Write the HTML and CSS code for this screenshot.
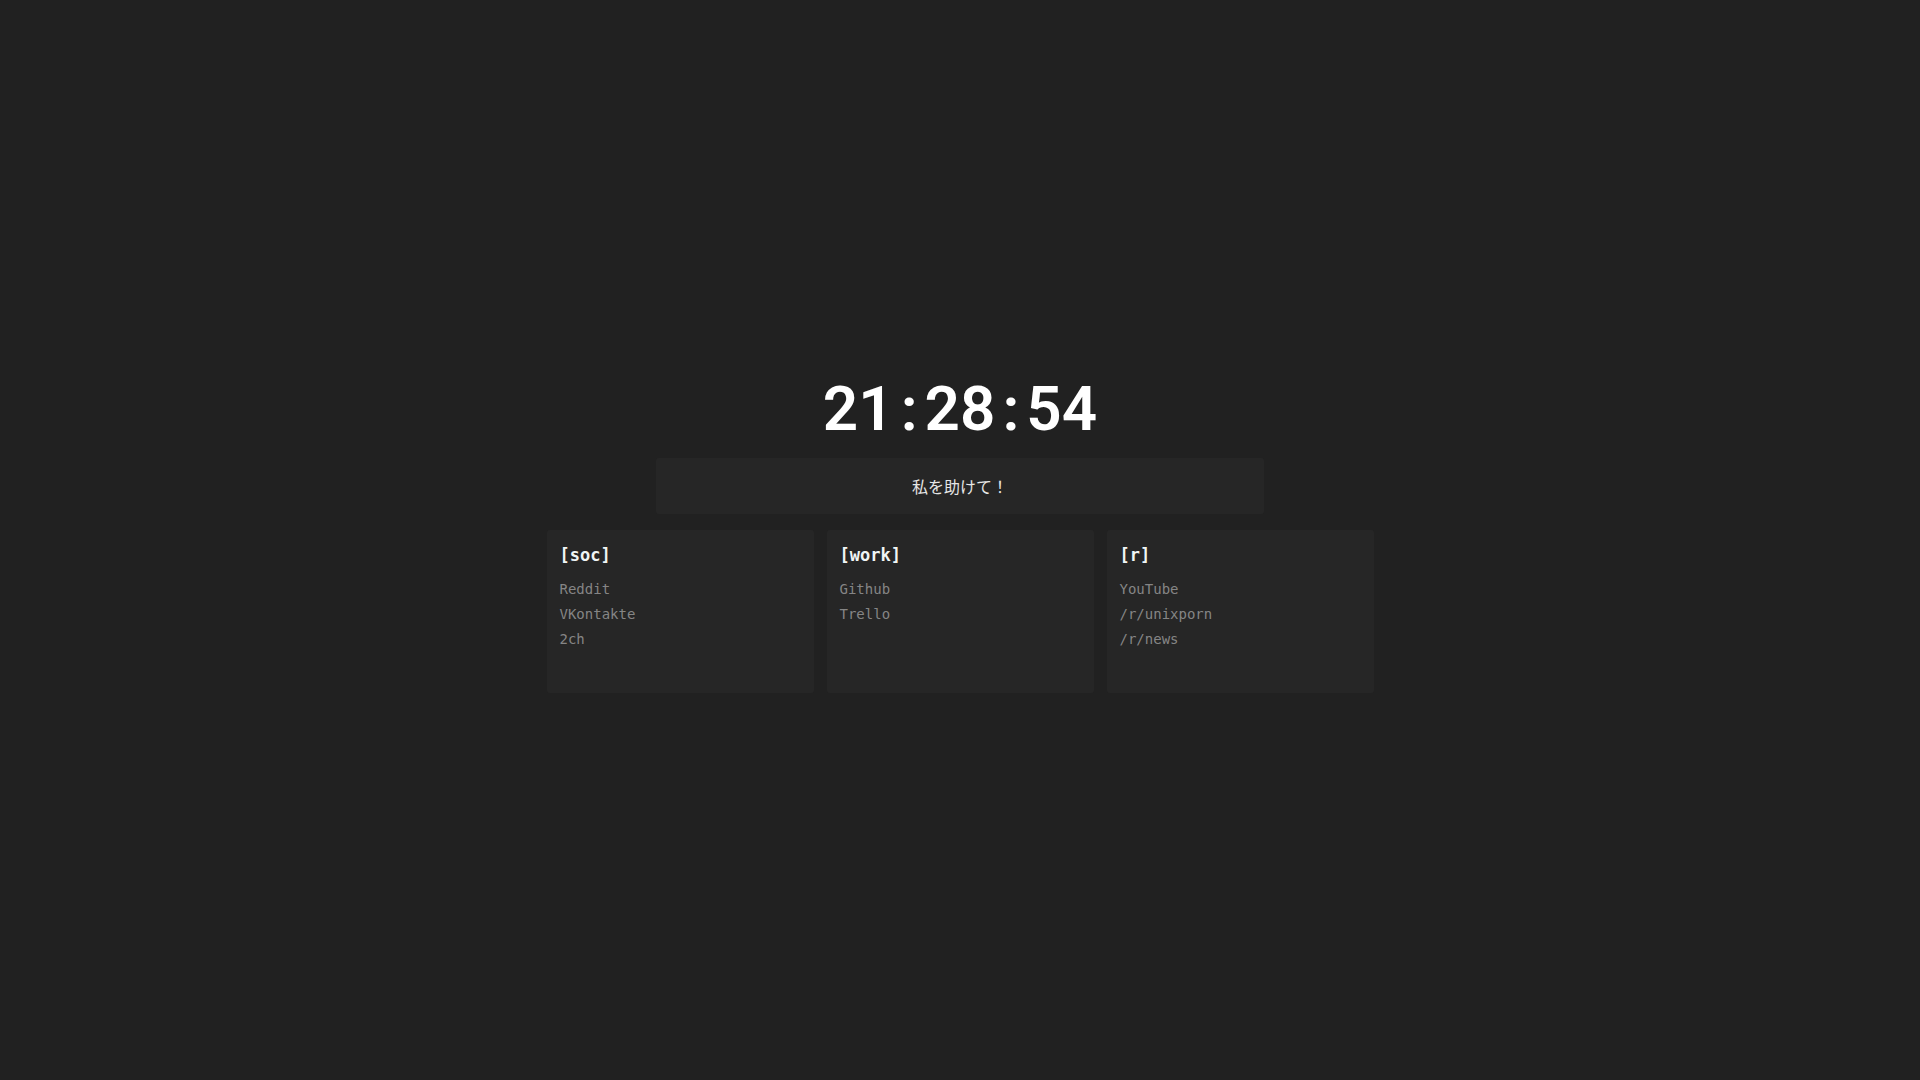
FILE: index.html
```html
<!DOCTYPE html>
<html lang="ja">
<head>
<meta charset="utf-8">
<title>Start</title>
<link rel="stylesheet" href="styles.css">
</head>
<body>
<main class="page">
  <div class="clock"><span class="num">21</span><span class="colon">:</span><span class="num">28</span><span class="colon">:</span><span class="num">54</span></div>
  <div class="search">私を助けて！</div>
  <section class="cards">
    <div class="card">
      <h2 class="card-title">[soc]</h2>
      <ul class="links">
        <li>Reddit</li>
        <li>VKontakte</li>
        <li>2ch</li>
      </ul>
    </div>
    <div class="card">
      <h2 class="card-title">[work]</h2>
      <ul class="links">
        <li>Github</li>
        <li>Trello</li>
      </ul>
    </div>
    <div class="card">
      <h2 class="card-title">[r]</h2>
      <ul class="links">
        <li>YouTube</li>
        <li>/r/unixporn</li>
        <li>/r/news</li>
      </ul>
    </div>
  </section>
</main>
</body>
</html>
```
FILE: styles.css
```css
html, body {
  margin: 0;
  padding: 0;
  background: #212121;
  height: 100%;
}
.page {
  display: flex;
  flex-direction: column;
  align-items: center;
  padding-top: 372px;
}
.clock {
  font-family: Roboto, "Noto Sans", sans-serif;
  font-weight: 600;
  font-size: 62px;
  line-height: 74px;
  color: #ffffff;
  white-space: pre;
  display: flex;
}
.colon {
  margin: 0 7px;
}
.search {
  margin-top: 12px;
  width: 608px;
  height: 56px;
  background: #262626;
  border-radius: 3px;
  display: flex;
  align-items: center;
  justify-content: center;
  font-family: "Noto Sans CJK JP", "Noto Sans", sans-serif;
  font-size: 16px;
  color: #e6e6e6;
}
.cards {
  margin-top: 16px;
  display: flex;
  gap: 13px;
}
.card {
  width: 267px;
  height: 163px;
  box-sizing: border-box;
  background: #262626;
  border-radius: 3px;
  padding: 13px 13px;
}
.card-title {
  margin: 0;
  font-family: "DejaVu Sans Mono", "Liberation Mono", monospace;
  font-weight: 700;
  font-size: 17px;
  line-height: 24px;
  color: #f0f5f5;
}
.links {
  list-style: none;
  margin: 10px 0 0;
  padding: 0;
  font-family: "DejaVu Sans Mono", "Liberation Mono", monospace;
  font-size: 14px;
  line-height: 25px;
  color: #858585;
}
```
